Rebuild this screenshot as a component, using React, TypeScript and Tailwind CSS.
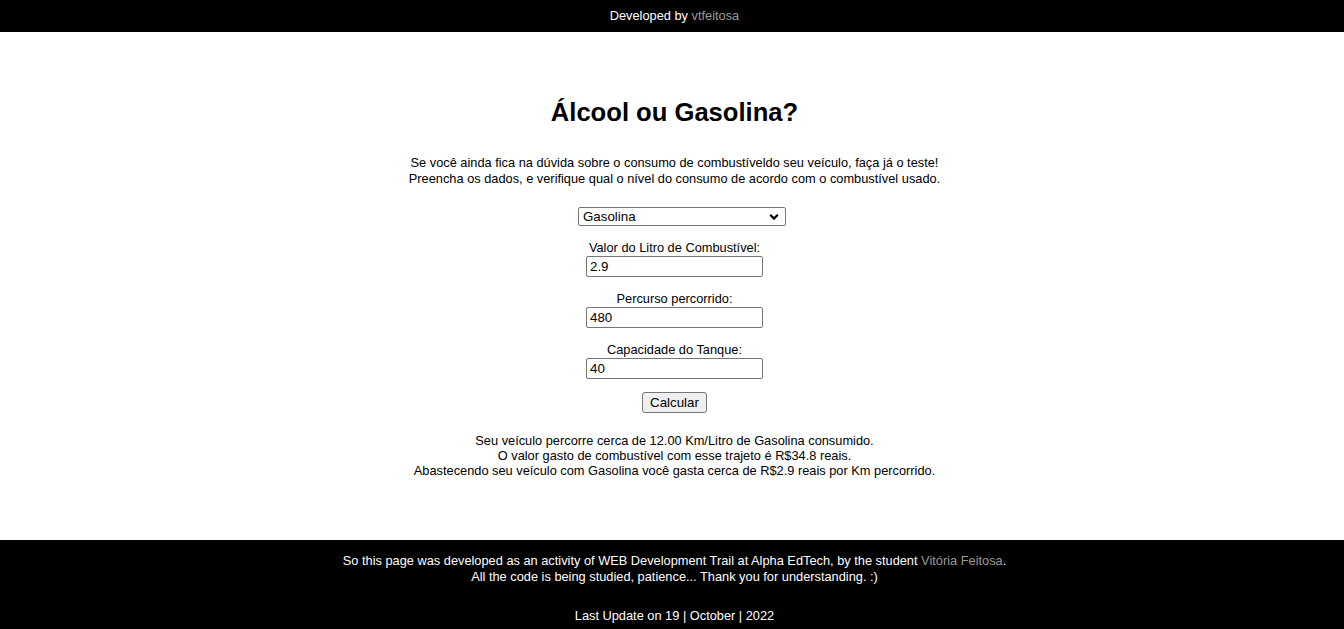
import { useState } from "react";

const font = { fontFamily: '"Liberation Sans", Arial, sans-serif' };

function Field({ label, value }: { label: string; value: string }) {
  const [v, setV] = useState(value);
  return (
    <div className="mt-[14px] flex flex-col items-center">
      <label className="text-[12.8px] leading-[15px] text-black">{label}</label>
      <input
        value={v}
        onChange={(e) => setV(e.target.value)}
        className="mt-px h-[21px] w-[177px] rounded-[2px] border border-[#767676] bg-white px-[3px] text-[13.33px] text-black outline-none"
      />
    </div>
  );
}

export default function App() {
  const [fuel, setFuel] = useState("Gasolina");

  return (
    <div className="flex min-h-screen flex-col bg-white pl-[5px] text-black" style={font}>
      {/* top bar */}
      <header className="-ml-[5px] flex h-8 items-center justify-center bg-black pl-[5px] text-[12.8px] text-white">
        <span>
          Developed by <a className="text-[#9a9a9a]">vtfeitosa</a>
        </span>
      </header>

      <main className="flex flex-1 flex-col items-center pb-[62px] text-center">
        <h1 className="mt-[66px] text-[25.6px] font-bold leading-[29px]">Álcool ou Gasolina?</h1>

        <p className="mt-[28px] text-[12.8px] leading-[16px]">
          Se você ainda fica na dúvida sobre o consumo de combustíveldo seu veículo, faça já o teste!
          <br />
          Preencha os dados, e verifique qual o nível do consumo de acordo com o combustível usado.
        </p>

        <div className="relative ml-[15px] mt-[20px] flex h-[19px]">
          <select
            value={fuel}
            onChange={(e) => setFuel(e.target.value)}
            className="h-[19px] w-[208px] appearance-none rounded-[2px] border border-[#767676] bg-white pl-[4px] text-left text-[13.33px] leading-[15px] text-black outline-none"
          >
            <option>Gasolina</option>
            <option>Álcool</option>
          </select>
          <svg
            className="pointer-events-none absolute right-[7px] top-[6px]"
            width="10"
            height="8"
            viewBox="0 0 10 8"
          >
            <path d="M1.2 1.8 L5 5.6 L8.8 1.8" fill="none" stroke="#000" strokeWidth="2.2" />
          </svg>
        </div>

        <Field label="Valor do Litro de Combustível:" value="2.9" />
        <Field label="Percurso percorrido:" value="480" />
        <Field label="Capacidade do Tanque:" value="40" />

        <button className="mt-[13px] h-[21px] rounded-[3px] border border-[#767676] bg-[#efefef] px-[7px] text-[13.33px] leading-[15px] text-black">
          Calcular
        </button>

        <div className="mt-[20px] text-[12.8px] leading-[15px]">
          <p>Seu veículo percorre cerca de 12.00 Km/Litro de Gasolina consumido.</p>
          <p>O valor gasto de combustível com esse trajeto é R$34.8 reais.</p>
          <p>Abastecendo seu veículo com Gasolina você gasta cerca de R$2.9 reais por Km percorrido.</p>
        </div>
      </main>

      <footer className="-ml-[5px] flex flex-col items-center bg-black pb-[6px] pl-[5px] pt-[13px] text-center text-[12.8px] leading-[16px] text-white">
        <p>
          So this page was developed as an activity of WEB Development Trail at Alpha EdTech, by the student{" "}
          <a className="text-[#9a9a9a]">Vitória Feitosa</a>.
          <br />
          All the code is being studied, patience... Thank you for understanding. :)
        </p>
        <p className="mt-[23px]">Last Update on 19 | October | 2022</p>
      </footer>
    </div>
  );
}
